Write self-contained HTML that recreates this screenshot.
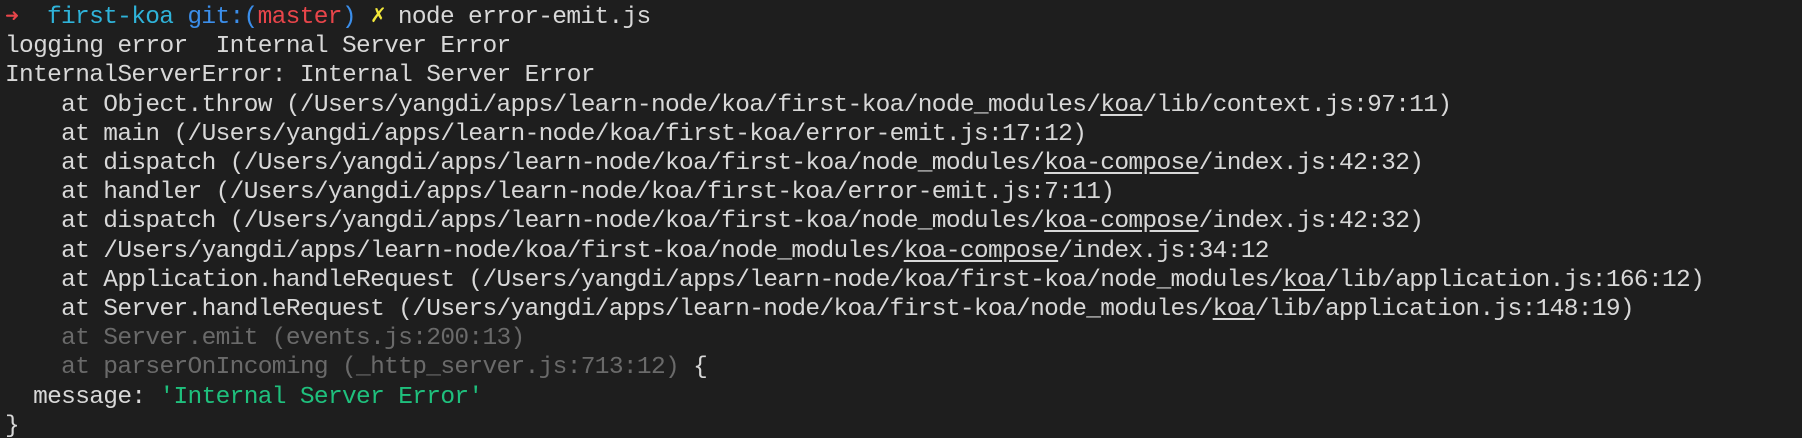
<!DOCTYPE html>
<html><head><meta charset="utf-8"><style>
html,body{margin:0;padding:0;background:#1e1e1e;width:1802px;height:438px;overflow:hidden}
pre{margin:3px 0 0 0;padding:0 0 0 5px;font-family:"Liberation Mono",monospace;font-size:24.5px;letter-spacing:-0.66px;line-height:29.2px;color:#d8d8d8;white-space:pre}
.r{color:#e8454a}.c{color:#2fb3d9}.b{color:#3b8eea}.y{color:#f2e83a}.g{color:#6a6a6a}.gr{color:#1fc07d}
.ar{display:inline-block;width:13.85px;font-size:17px;vertical-align:top}
.x{display:inline-block;width:13.85px;overflow:visible;font-size:20px;vertical-align:top}
u{text-decoration:underline;text-underline-offset:3px}
</style></head><body><pre><span class="r ar">➜</span>  <span class="c">first-koa</span> <span class="b">git:(</span><span class="r">master</span><span class="b">)</span> <span class="y x">✗</span> node error-emit.js
logging error  Internal Server Error
InternalServerError: Internal Server Error
    at Object.throw (/Users/yangdi/apps/learn-node/koa/first-koa/node_modules/<u>koa</u>/lib/context.js:97:11)
    at main (/Users/yangdi/apps/learn-node/koa/first-koa/error-emit.js:17:12)
    at dispatch (/Users/yangdi/apps/learn-node/koa/first-koa/node_modules/<u>koa-compose</u>/index.js:42:32)
    at handler (/Users/yangdi/apps/learn-node/koa/first-koa/error-emit.js:7:11)
    at dispatch (/Users/yangdi/apps/learn-node/koa/first-koa/node_modules/<u>koa-compose</u>/index.js:42:32)
    at /Users/yangdi/apps/learn-node/koa/first-koa/node_modules/<u>koa-compose</u>/index.js:34:12
    at Application.handleRequest (/Users/yangdi/apps/learn-node/koa/first-koa/node_modules/<u>koa</u>/lib/application.js:166:12)
    at Server.handleRequest (/Users/yangdi/apps/learn-node/koa/first-koa/node_modules/<u>koa</u>/lib/application.js:148:19)
<span class="g">    at Server.emit (events.js:200:13)</span>
<span class="g">    at parserOnIncoming (_http_server.js:713:12)</span> {
  message: <span class="gr">'Internal Server Error'</span>
}</pre></body></html>
